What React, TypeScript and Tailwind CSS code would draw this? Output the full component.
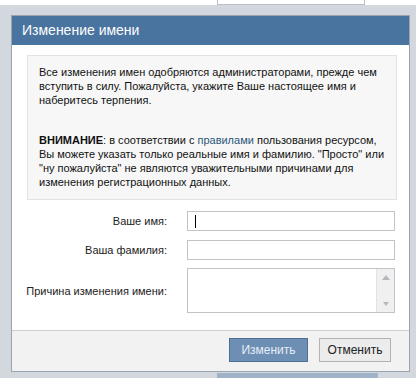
import React from "react";

const font = { fontFamily: '"Liberation Sans", Arial, sans-serif' };

const FormRow: React.FC<{ label: string; children: React.ReactNode; className?: string }> = ({
  label,
  children,
  className,
}) => (
  <div className={`flex items-center ${className ?? ""}`}>
    <div className="w-[140px] flex justify-end whitespace-nowrap text-[11px] text-[#222]">{label}</div>
    <div className="ml-[20px] w-[208px]">{children}</div>
  </div>
);

export default function App() {
  return (
    <div className="w-[416px] h-[378px] overflow-hidden bg-white" style={font}>
      {/* page behind the dialog */}
      <div className="h-[5px] bg-white">
        <div className="ml-[217px] w-[148px] h-[5px] border-x border-b border-[#b8bec6] bg-white" />
      </div>

      <div className="flex flex-col h-[373px] bg-[#d3d8de] pl-[11px] pr-[6px] pt-[10px]">
        <div className="flex flex-col border border-[#9aa3ae] bg-white">
          {/* header */}
          <div className="h-[29px] bg-[#4a74a0] flex items-center pl-[10px] text-[14px] text-white">
            Изменение имени
          </div>

          {/* body */}
          <div className="h-[285px] pt-[10px] pl-[15px] pr-[12px]">
            <div className="border border-[#dfe2e6] bg-[#f7f7f7] pl-[11px] pr-[6px] pt-[9px] pb-[10px] text-[11px] leading-[14.2px] text-[#111]">
              <p>
                Все изменения имен одобряются администраторами, прежде чем
                <br />
                вступить в силу. Пожалуйста, укажите Ваше настоящее имя и
                <br />
                наберитесь терпения.
              </p>
              <p className="mt-[25px]">
                <b>ВНИМАНИЕ</b>: в соответствии с <span className="text-[#2b587a]">правилами</span>{" "}
                пользования ресурсом,
                <br />
                Вы можете указать только реальные имя и фамилию. "Просто" или
                <br />
                "ну пожалуйста" не являются уважительными причинами для
                <br />
                изменения регистрационных данных.
              </p>
            </div>

            <FormRow label="Ваше имя:" className="mt-[11px]">
              <div className="h-[20px] border border-[#c0c4c9] bg-white flex items-center pl-[7px]">
                <div className="w-px h-[13px] bg-black" />
              </div>
            </FormRow>
            <FormRow label="Ваша фамилия:" className="mt-[9px]">
              <div className="h-[20px] border border-[#c0c4c9] bg-white" />
            </FormRow>
            <FormRow label="Причина изменения имени:" className="mt-[8px]">
              <div className="h-[45px] border border-[#c0c4c9] bg-white flex justify-end">
                <div className="w-[18px] bg-[#f0f0f0] border-l border-[#e2e2e2] flex flex-col items-center justify-between py-[6px]">
                  <svg width="8" height="5" viewBox="0 0 8 5">
                    <path d="M0 5 L4 0 L8 5 Z" fill="#b4b8bd" />
                  </svg>
                  <svg width="6" height="4" viewBox="0 0 6 4">
                    <path d="M0 0 L6 0 L3 4 Z" fill="#b4b8bd" />
                  </svg>
                </div>
              </div>
            </FormRow>
          </div>

          {/* footer */}
          <div className="h-[41px] bg-[#f2f2f2] border-t border-[#cfcfcf] flex justify-end items-start pt-[7px] pr-[18px] gap-[11px]">
            <button className="w-[79px] h-[24px] bg-[#6d8fb4] border border-[#4c6f95] text-[12px] text-[#e6edf5]">
              Изменить
            </button>
            <button className="w-[72px] h-[24px] bg-[#ececec] border border-[#b3b3b3] text-[12px] text-[#222]">
              Отменить
            </button>
          </div>
        </div>

        {/* bit of the page showing below */}
        <div className="mt-auto ml-[206px] w-[161px] h-[5px] bg-[#9fb2c8]" />
      </div>
    </div>
  );
}
